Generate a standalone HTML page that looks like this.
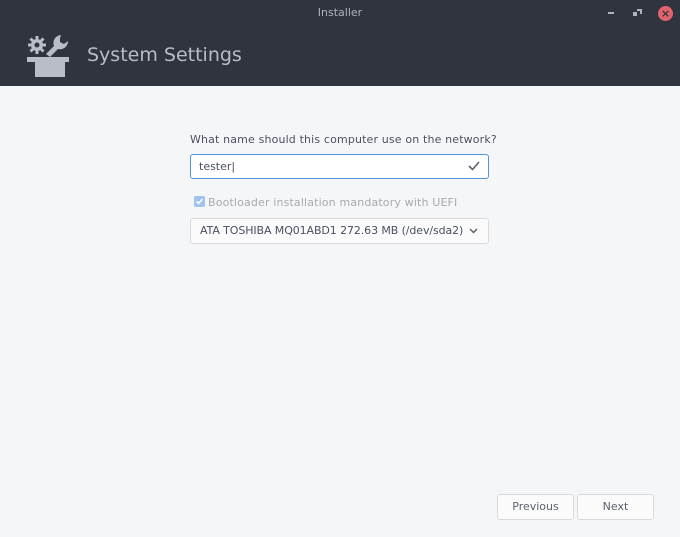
<!DOCTYPE html>
<html><head><style>
body{margin:0;width:680px;height:537px;background:#f5f6f7;font-family:"DejaVu Sans","Liberation Sans",sans-serif;overflow:hidden;position:relative;color:#4b5162}
.hdr{position:absolute;left:0;top:0;width:680px;height:86px;background:#2f343f}
.t{position:absolute;top:6px;left:0;width:680px;text-align:center;color:#aeb3bd;font-size:11px}
.h1{position:absolute;left:87px;top:44px;font-size:19px;color:#b8bdc7}
.lbl{position:absolute;left:190px;top:133px;font-size:11px;color:#4b5162;letter-spacing:0.15px}
.inp{position:absolute;left:190px;top:154px;width:297px;height:23px;border:1px solid #5294e2;border-radius:3px;background:#fff}
.inp span{position:absolute;left:8px;top:5px;font-size:11px;color:#4b5162}
.cb{position:absolute;left:194px;top:196px;width:11px;height:11px;background:#9fc3ee;border-radius:2px}
.cb svg{display:block}
.cbl{position:absolute;left:208px;top:196px;font-size:11px;color:#a6aab2;letter-spacing:0.15px}
.sel{position:absolute;left:190px;top:218px;width:297px;height:24px;border:1px solid #d8dadf;border-radius:3px;background:#fbfbfc}
.sel span{position:absolute;left:9px;top:5px;font-size:11px;color:#4b5162;letter-spacing:-0.1px}
.btn{position:absolute;top:494px;height:24px;border:1px solid #d8dadf;border-radius:3px;background:#fbfbfc;font-size:11px;color:#5c616c;text-align:center;line-height:24px}
</style></head><body>
<div class="hdr"></div>
<div class="t">Installer</div>
<div style="position:absolute;left:608px;top:12px;width:6px;height:2px;background:#aeb3bd"></div>
<div style="position:absolute;left:637px;top:9px;width:5px;height:5px;border-top:2px solid #aeb3bd;border-right:2px solid #aeb3bd;box-sizing:border-box"></div>
<div style="position:absolute;left:633px;top:12px;width:4px;height:4px;background:#aeb3bd"></div>
<div style="position:absolute;left:658px;top:6px;width:15px;height:15px;border-radius:50%;background:#e0636b;color:#2f343f;font-size:11px;line-height:15px;text-align:center;font-weight:bold">×</div>
<svg style="position:absolute;left:25px;top:33px" width="46" height="46" viewBox="0 0 46 46" fill="#b8bdc7">
<circle cx="12" cy="12" r="6"/><g stroke="#b8bdc7" stroke-width="3"><line x1="12" y1="3" x2="12" y2="21"/><line x1="3" y1="12" x2="21" y2="12"/><line x1="5.5" y1="5.5" x2="18.5" y2="18.5"/><line x1="18.5" y1="5.5" x2="5.5" y2="18.5"/></g><circle cx="12" cy="12" r="2.5" fill="#2f343f"/>
<path d="M36 2a8 8 0 0 0-7 11l-8 8 4 3 8-8a8 8 0 0 0 10-8l-4 3-4-2v-4z"/>
<path d="M2 24h42v5h-4v15h-30v-15h-8z"/>
</svg>
<div class="h1">System Settings</div>
<div class="lbl">What name should this computer use on the network?</div>
<div class="inp"><span>tester|</span><svg style="position:absolute;right:8px;top:6px" width="12" height="10"><path d="M1 5l3.5 3.5L11 1" stroke="#5c616c" stroke-width="1.6" fill="none"/></svg></div>
<div class="cb"><svg width="11" height="11"><path d="M2.5 5.5l2 2 4-4.5" stroke="#fff" stroke-width="1.6" fill="none"/></svg></div>
<div class="cbl">Bootloader installation mandatory with UEFI</div>
<div class="sel"><span>ATA TOSHIBA MQ01ABD1 272.63 MB (/dev/sda2)</span><svg style="position:absolute;right:10px;top:9px" width="9" height="6"><path d="M1 1l3.5 3.5L8 1" stroke="#5c616c" stroke-width="1.5" fill="none"/></svg></div>
<div class="btn" style="left:497px;width:75px">Previous</div>
<div class="btn" style="left:577px;width:75px">Next</div>
</body></html>
